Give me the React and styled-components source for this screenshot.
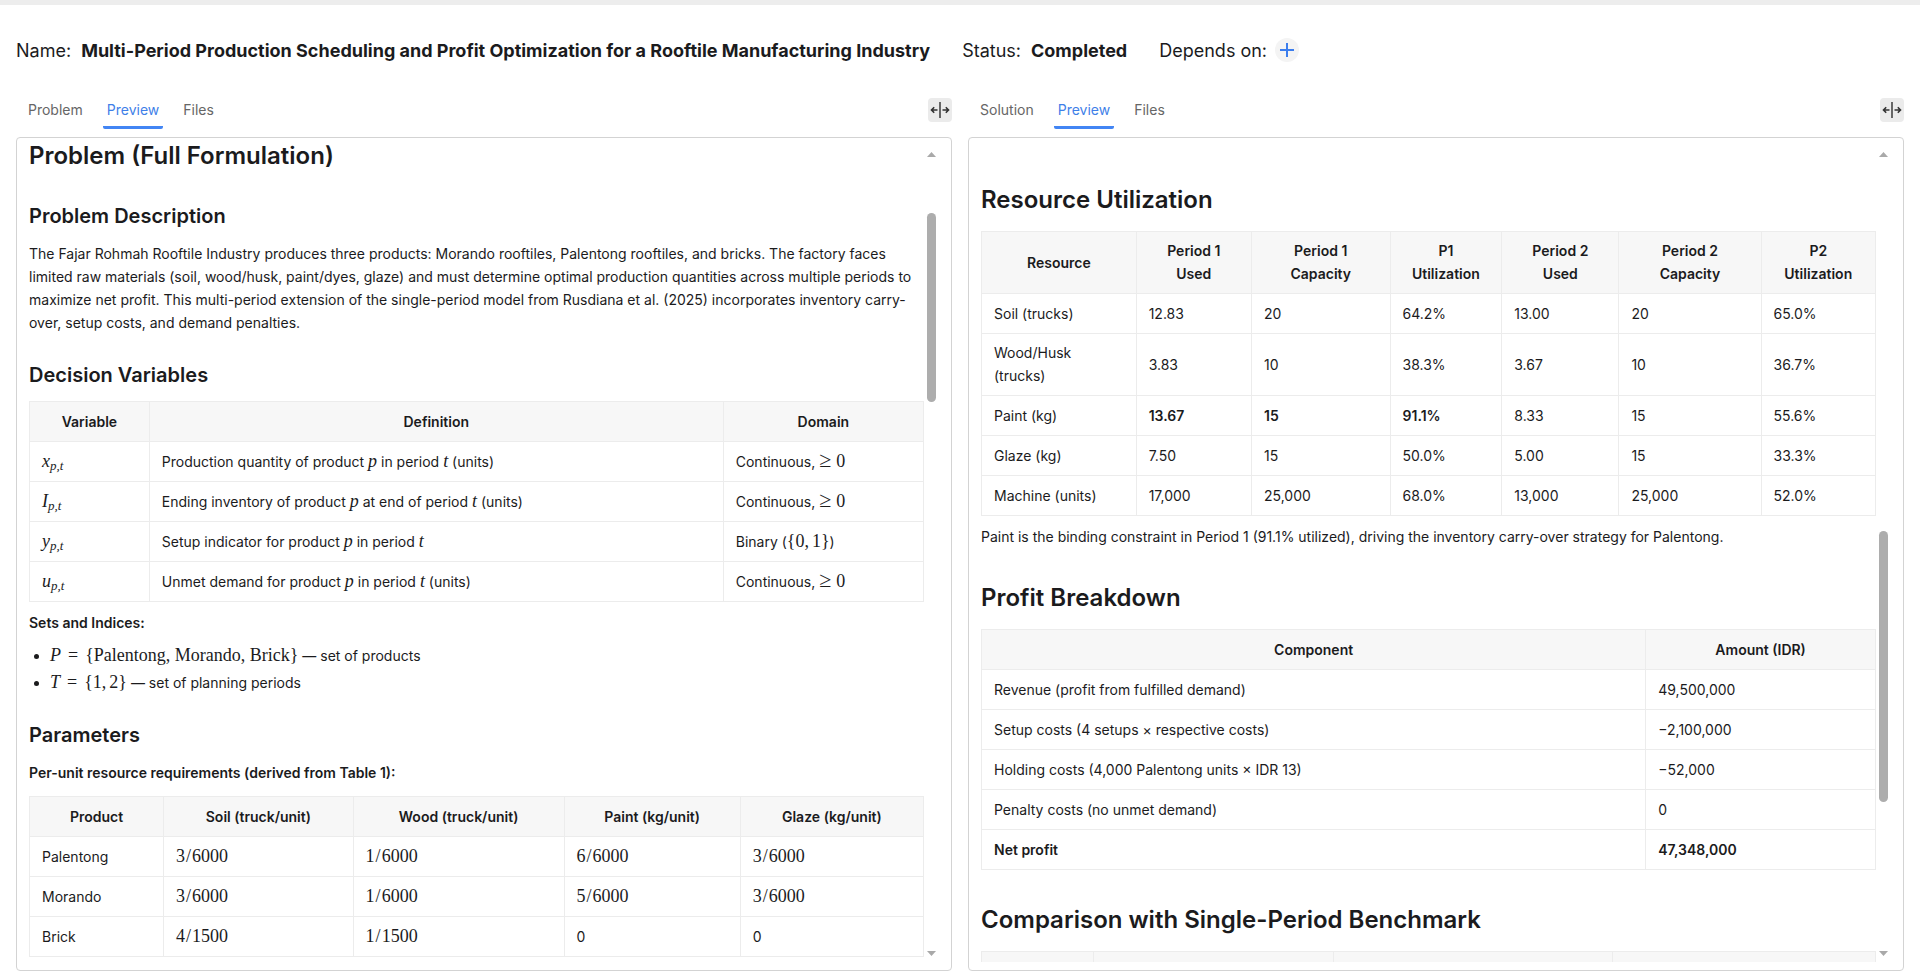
import React, { useState } from "react";
import styled, { createGlobalStyle } from "styled-components";

const GlobalStyle = createGlobalStyle`
  * {
    box-sizing: border-box;
  }
  body {
    margin: 0;
    background: #fff;
    color: #1b1b1d;
    font-family: Inter, "Liberation Sans", sans-serif;
    font-size: 14px;
    line-height: 23px;
  }
  button {
    font: inherit;
    border: none;
    padding: 0;
    cursor: pointer;
  }
`;

const Page = styled.div`
  display: flex;
  flex-direction: column;
  height: 100vh;
  border-top: 5px solid #ededed;
  padding: 0 16px 7px;
`;

const Header = styled.header`
  display: flex;
  align-items: center;
  gap: 32px;
  height: 90px;
  margin-bottom: 2px;
  font-size: 18px;
`;

const Field = styled.div`
  display: flex;
  align-items: center;
  gap: ${(props) => props.$gap || 10}px;
  strong {
    font-weight: 700;
  }
`;

const AddButton = styled.button`
  display: flex;
  width: 24px;
  height: 24px;
  border-radius: 50%;
  background: #f4f4f4;
`;

const Columns = styled.main`
  display: grid;
  grid-template-columns: 1fr 1fr;
  gap: 16px;
  flex: 1;
  min-height: 0;
`;

const Column = styled.section`
  display: flex;
  flex-direction: column;
  gap: 8px;
  min-width: 0;
  min-height: 0;
`;

const TabBar = styled.div`
  display: flex;
  align-items: flex-start;
  justify-content: space-between;
`;

const Tabs = styled.div`
  display: flex;
  gap: 16px;
  padding-left: 8px;
`;

const Tab = styled.button`
  height: 32px;
  padding: 0 4px 5px;
  background: none;
  color: ${(props) => (props.$active ? "#3f7fe8" : "#666")};
  border-bottom: 3px solid ${(props) => (props.$active ? "#4285f4" : "transparent")};
  border-radius: 2px;
`;

const ExpandButton = styled.button`
  display: flex;
  width: 24px;
  height: 24px;
  margin-top: 1px;
  border-radius: 4px;
  background: #ebebeb;
`;

const Panel = styled.div`
  display: flex;
  flex: 1;
  min-height: 0;
  padding: 2px 12px 8px;
  border: 1px solid #d3d3d3;
  border-radius: 4px;
`;

const Viewport = styled.div`
  flex: 1;
  min-width: 0;
  overflow: hidden;
`;

const Document = styled.article`
  display: flow-root;
  padding-top: ${(props) => props.$top}px;
  h1,
  h2 {
    margin: 34px 0 15px;
    font-size: 24px;
    line-height: 32px;
    font-weight: 600;
  }
  h1 {
    margin: 0 0 30px;
  }
  h3 {
    margin: 27px 0 12px;
    font-size: 20px;
    line-height: 28px;
    font-weight: 600;
  }
  p {
    margin: 0 0 10px;
  }
  strong {
    font-weight: 600;
  }
  ul {
    margin: 0;
    padding-left: 21px;
  }
  li + li {
    margin-top: 4px;
  }
`;

const TableStyled = styled.table`
  width: 100%;
  margin: 12px 0 9px;
  table-layout: fixed;
  border-collapse: collapse;
  th,
  td {
    height: 40px;
    padding: 7px 12px 8px;
    border: 1px solid #ececec;
    text-align: left;
  }
  th {
    background: #f7f7f7;
    font-weight: 600;
    text-align: center;
  }
`;

const Col = styled.col`
  width: ${(props) => props.$width}%;
`;

const MathStyled = styled.span`
  font-family: "Liberation Serif", serif;
  font-size: 18px;
  line-height: 16px;
  white-space: nowrap;
  sub {
    font-size: 13px;
    line-height: 0;
    vertical-align: -3px;
  }
  .rel {
    margin: 0 7px;
  }
  .ge {
    margin-right: 5px;
    font-size: 22px;
    line-height: 0;
  }
  .over {
    margin: 0 1px;
  }
  .comma {
    margin-right: 3px;
  }
`;

const ScrollbarStyled = styled.div`
  display: flex;
  flex-direction: column;
  align-items: center;
  width: 15px;
  padding: 12px 0 6px;
`;

const Arrow = styled.svg`
  width: 9px;
  height: 5px;
  fill: #a9a9a9;
`;

const Track = styled.div`
  display: flex;
  flex-direction: column;
  flex: 1;
  width: 9px;
  margin: 5px 0;
`;

const Space = styled.div`
  flex: ${(props) => props.$size} 0 0;
`;

const Thumb = styled(Space)`
  border-radius: 5px;
  background: #adadad;
`;

const Scrollbar = ({ before, size, after }) => (
  <ScrollbarStyled>
    <Arrow viewBox="0 0 9 5">
      <path d="M4.5 0 9 5H0z" />
    </Arrow>
    <Track>
      <Space $size={before} />
      <Thumb $size={size} />
      <Space $size={after} />
    </Track>
    <Arrow viewBox="0 0 9 5">
      <path d="M0 0h9L4.5 5z" />
    </Arrow>
  </ScrollbarStyled>
);

const PlusIcon = () => (
  <svg width="24" height="24" viewBox="0 0 24 24" stroke="#3b7ded" strokeWidth="2">
    <path d="M5 12h14M12 5v14" />
  </svg>
);

const ExpandIcon = () => (
  <svg width="24" height="24" viewBox="0 0 24 24" fill="none">
    <path d="M12 4v16" stroke="#666" strokeWidth="2" />
    <path
      d="M9.5 12H4M6.2 9.3 3.5 12l2.7 2.7M14.5 12H20M17.8 9.3l2.7 2.7-2.7 2.7"
      stroke="#333"
      strokeWidth="1.6"
    />
  </svg>
);

const Table = ({ widths, head, rows = [] }) => (
  <TableStyled>
    <colgroup>
      {widths.map((w, index) => (
        <Col key={index} $width={w} />
      ))}
    </colgroup>
    <thead>
      <tr>
        {head.map((h, index) => (
          <th key={index}>{h}</th>
        ))}
      </tr>
    </thead>
    <tbody>
      {rows.map((row, index) => (
        <tr key={index}>
          {row.map((cell, i) => (
            <td key={i}>{cell}</td>
          ))}
        </tr>
      ))}
    </tbody>
  </TableStyled>
);

const Var = ({ name, sub }) => (
  <MathStyled>
    <i>{name}</i>
    {sub && (
      <sub>
        <i>{sub}</i>
      </sub>
    )}
  </MathStyled>
);

const Fraction = ({ top, bottom }) => (
  <MathStyled>
    {top}
    <span className="over">/</span>
    {bottom}
  </MathStyled>
);

const Continuous = () => (
  <>
    Continuous,{" "}
    <MathStyled>
      <span className="ge">≥</span>0
    </MathStyled>
  </>
);

const variables = [
  [
    <Var name="x" sub="p,t" />,
    <>
      Production quantity of product <Var name="p" /> in period <Var name="t" /> (units)
    </>,
    <Continuous />,
  ],
  [
    <Var name="I" sub="p,t" />,
    <>
      Ending inventory of product <Var name="p" /> at end of period <Var name="t" /> (units)
    </>,
    <Continuous />,
  ],
  [
    <Var name="y" sub="p,t" />,
    <>
      Setup indicator for product <Var name="p" /> in period <Var name="t" />
    </>,
    <>
      Binary (
      <MathStyled>
        {"{0"}
        <span className="comma">,</span>
        {"1}"}
      </MathStyled>
      )
    </>,
  ],
  [
    <Var name="u" sub="p,t" />,
    <>
      Unmet demand for product <Var name="p" /> in period <Var name="t" /> (units)
    </>,
    <Continuous />,
  ],
];

const requirements = [
  ["Palentong", [3, 6000], [1, 6000], [6, 6000], [3, 6000]],
  ["Morando", [3, 6000], [1, 6000], [5, 6000], [3, 6000]],
  ["Brick", [4, 1500], [1, 1500], "0", "0"],
].map((row) =>
  row.map((c) => (Array.isArray(c) ? <Fraction top={c[0]} bottom={c[1]} /> : c))
);

const bold = (text) => <strong>{text}</strong>;

const utilization = [
  ["Soil (trucks)", "12.83", "20", "64.2%", "13.00", "20", "65.0%"],
  ["Wood/Husk (trucks)", "3.83", "10", "38.3%", "3.67", "10", "36.7%"],
  ["Paint (kg)", bold("13.67"), bold("15"), bold("91.1%"), "8.33", "15", "55.6%"],
  ["Glaze (kg)", "7.50", "15", "50.0%", "5.00", "15", "33.3%"],
  ["Machine (units)", "17,000", "25,000", "68.0%", "13,000", "25,000", "52.0%"],
];

const profit = [
  ["Revenue (profit from fulfilled demand)", "49,500,000"],
  ["Setup costs (4 setups × respective costs)", "−2,100,000"],
  ["Holding costs (4,000 Palentong units × IDR 13)", "−52,000"],
  ["Penalty costs (no unmet demand)", "0"],
  [bold("Net profit"), bold("47,348,000")],
];

const twoLines = (first, second) => (
  <>
    {first}
    <br />
    {second}
  </>
);

const ProblemDocument = () => (
  <Document $top={0}>
    <h1>Problem (Full Formulation)</h1>
    <h3>Problem Description</h3>
    <p>
      The Fajar Rohmah Rooftile Industry produces three products: Morando rooftiles,
      Palentong rooftiles, and bricks. The factory faces limited raw materials (soil,
      wood/husk, paint/dyes, glaze) and must determine optimal production quantities
      across multiple periods to maximize net profit. This multi-period extension of the
      single-period model from Rusdiana et al. (2025) incorporates inventory carry-over,
      setup costs, and demand penalties.
    </p>
    <h3>Decision Variables</h3>
    <Table
      widths={[13.4, 64.2, 22.4]}
      head={["Variable", "Definition", "Domain"]}
      rows={variables}
    />
    <p>
      <strong>Sets and Indices:</strong>
    </p>
    <ul>
      <li>
        <MathStyled>
          <i>P</i>
          <span className="rel">=</span>
          {"{Palentong, Morando, Brick}"}
        </MathStyled>{" "}
        — set of products
      </li>
      <li>
        <MathStyled>
          <i>T</i>
          <span className="rel">=</span>
          {"{1"}
          <span className="comma">,</span>
          {"2}"}
        </MathStyled>{" "}
        — set of planning periods
      </li>
    </ul>
    <h3>Parameters</h3>
    <p>
      <strong>Per-unit resource requirements (derived from Table 1):</strong>
    </p>
    <Table
      widths={[15, 21.2, 23.6, 19.7, 20.5]}
      head={[
        "Product",
        "Soil (truck/unit)",
        "Wood (truck/unit)",
        "Paint (kg/unit)",
        "Glaze (kg/unit)",
      ]}
      rows={requirements}
    />
  </Document>
);

const SolutionDocument = () => (
  <Document $top={10}>
    <h2>Resource Utilization</h2>
    <Table
      widths={[17.3, 12.9, 15.5, 12.5, 13.1, 15.9, 12.8]}
      head={[
        "Resource",
        twoLines("Period 1", "Used"),
        twoLines("Period 1", "Capacity"),
        twoLines("P1", "Utilization"),
        twoLines("Period 2", "Used"),
        twoLines("Period 2", "Capacity"),
        twoLines("P2", "Utilization"),
      ]}
      rows={utilization}
    />
    <p>
      Paint is the binding constraint in Period 1 (91.1% utilized), driving the inventory
      carry-over strategy for Palentong.
    </p>
    <h2>Profit Breakdown</h2>
    <Table widths={[74.3, 25.7]} head={["Component", "Amount (IDR)"]} rows={profit} />
    <h2>Comparison with Single-Period Benchmark</h2>
    <Table widths={[12.5, 26.9, 31.2, 29.4]} head={["", "", "", ""]} />
  </Document>
);

const DocumentColumn = ({ name, scrollbar, children }) => {
  const [tab, setTab] = useState("Preview");
  return (
    <Column>
      <TabBar>
        <Tabs role="tablist">
          {[name, "Preview", "Files"].map((t) => (
            <Tab
              key={t}
              role="tab"
              aria-selected={t === tab}
              $active={t === tab}
              onClick={() => setTab(t)}
            >
              {t}
            </Tab>
          ))}
        </Tabs>
        <ExpandButton aria-label="Expand">
          <ExpandIcon />
        </ExpandButton>
      </TabBar>
      <Panel>
        <Viewport>{children}</Viewport>
        <Scrollbar {...scrollbar} />
      </Panel>
    </Column>
  );
};

export default function App() {
  return (
    <>
      <GlobalStyle />
      <Page>
        <Header>
          <Field>
            Name:
            <strong>
              Multi-Period Production Scheduling and Profit Optimization for a Rooftile
              Manufacturing Industry
            </strong>
          </Field>
          <Field>
            Status: <strong>Completed</strong>
          </Field>
          <Field $gap={8}>
            Depends on:
            <AddButton aria-label="Add dependency">
              <PlusIcon />
            </AddButton>
          </Field>
        </Header>
        <Columns>
          <DocumentColumn name="Problem" scrollbar={{ before: 51, size: 189, after: 544 }}>
            <ProblemDocument />
          </DocumentColumn>
          <DocumentColumn name="Solution" scrollbar={{ before: 369, size: 271, after: 144 }}>
            <SolutionDocument />
          </DocumentColumn>
        </Columns>
      </Page>
    </>
  );
}
